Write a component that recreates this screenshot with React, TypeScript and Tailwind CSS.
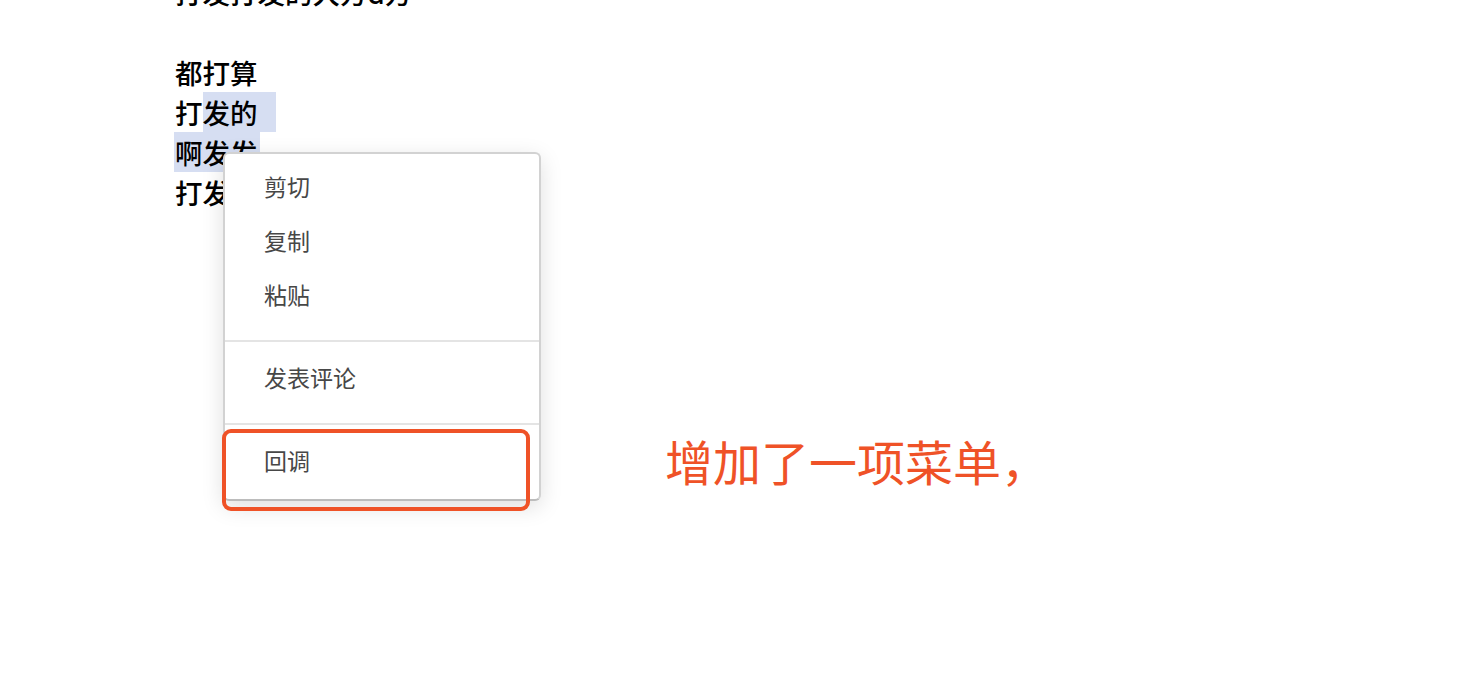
import React from "react";

const cjk = { fontFamily: '"Noto Sans CJK SC", "Noto Sans", sans-serif' };

function MenuItem({ label }: { label: string }) {
  return (
    <div className="flex h-[54px] items-center pl-[39px] text-[23px] leading-none text-[#474747]" style={cjk}>
      {label}
    </div>
  );
}

function ContextMenu() {
  return (
    <div className="absolute left-[223px] top-[152px] w-[318px] rounded-[6px] border-2 border-[#d2d2d2] border-b-[#bcbcbc] bg-white shadow-[0_6px_22px_rgba(0,0,0,0.13)]">
      <div className="pt-[5px] pb-[19px]">
        <MenuItem label="剪切" />
        <MenuItem label="复制" />
        <MenuItem label="粘贴" />
      </div>
      <div className="h-[2px] bg-[#e4e4e4]" />
      <div className="pt-[8px] pb-[19px]">
        <MenuItem label="发表评论" />
      </div>
      <div className="h-[2px] bg-[#e4e4e4]" />
      <div className="pt-[8px] pb-[12px]">
        <MenuItem label="回调" />
      </div>
    </div>
  );
}

export default function App() {
  return (
    <div className="relative h-[682px] w-[1476px] overflow-hidden bg-white">
      <div className="-mt-[28px] pl-[175px] text-[27.5px] leading-[40px] font-medium text-black" style={cjk}>
        <div>打发打发的大方d方</div>
        <div>&nbsp;</div>
        <div>都打算</div>
        <div>
          打<span className="bg-[#d6def2] pr-[18px]">发的</span>
        </div>
        <div>
          <span className="bg-[#d6def2] -ml-[1px] pl-[1px] pr-[2px]">啊发发</span>
        </div>
        <div>打发</div>
      </div>

      <ContextMenu />

      {/* annotation outline around the new item */}
      <div className="absolute left-[222px] top-[429px] h-[82px] w-[308px] rounded-[9px] border-[4.5px] border-[#ef5227]" />

      <div className="absolute left-[665px] top-[436px] text-[48px] leading-none text-[#ef5227]" style={cjk}>
        增加了一项菜单，
      </div>
    </div>
  );
}
